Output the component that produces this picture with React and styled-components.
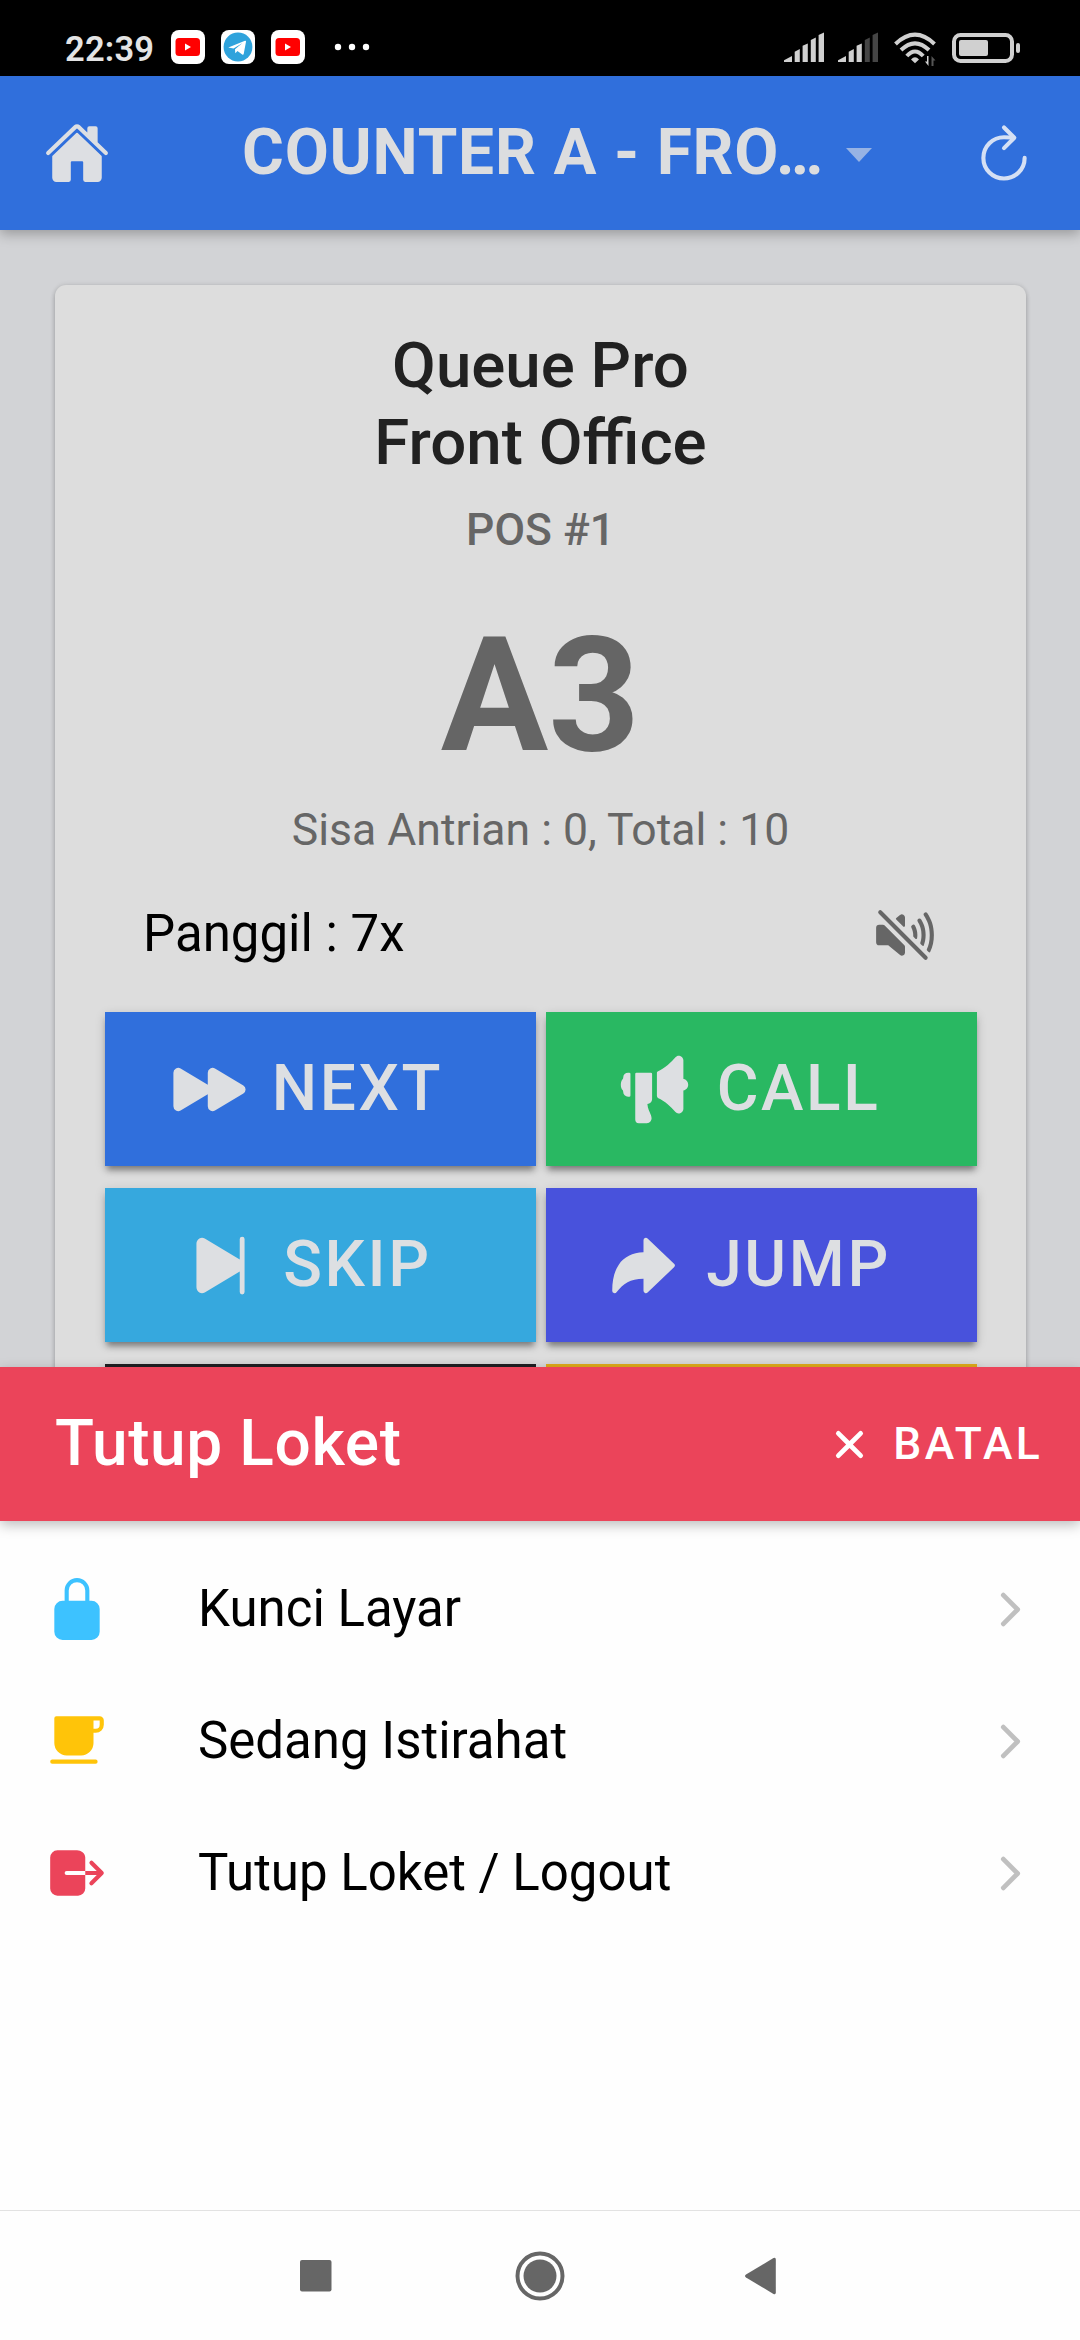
import React from 'react';
import styled, { createGlobalStyle } from 'styled-components';
import { IoHome, IoRefresh, IoVolumeMute, IoPlayForward, IoMegaphone, IoPlaySkipForward, IoArrowRedo, IoClose, IoLockClosed, IoCafe, IoLogOut, IoChevronForward } from 'react-icons/io5';

const GlobalStyle = createGlobalStyle`
  * { box-sizing: border-box; }
  body { margin: 0; background: #fff; font-family: Roboto, "Noto Sans", sans-serif; color: #000; }
`;
const Screen = styled.div`
  width: 1080px; height: 2340px; display: flex; flex-direction: column; overflow: hidden; background: #fefefe;
`;
const StatusBar = styled.header`
  flex: none; height: 76px; padding: 30px 60px 10px 65px; background: #000; color: #e4e4e4;
  display: flex; align-items: flex-start; justify-content: space-between;
`;
const StatusGroup = styled.div`
  display: flex; align-items: center; height: 34px;
`;
const Clock = styled.span`
  width: 106px; padding-top: 3px; font-size: 34.5px; line-height: 34px; font-weight: 600; letter-spacing: 0.2px; white-space: nowrap;
`;
const AppBadge = styled.svg`
  width: 34px; height: 34px; margin-right: 16px; display: block;
`;
const Dots = styled.svg`
  width: 36px; height: 8px; margin-left: 13px;
`;
const StatusIcons = styled(StatusGroup)`
  svg { display: block; overflow: visible; }
`;
const SignalIcon = styled.svg`
  width: 41px; height: 30px; margin-right: ${p => p.$gap}px;
`;
const WifiIcon = styled.svg`
  width: 42px; height: 34px; margin-right: 16px;
`;
const BatteryIcon = styled.svg`
  width: 68px; height: 30px; margin-top: 2px;
`;
const Toolbar = styled.div`
  flex: none; height: 154px; background: #306fdc; color: #dcdddf; display: flex; align-items: center;
  padding: 0 43px 0 44px; box-shadow: 0 4px 12px rgba(0,0,0,.28); z-index: 1;
`;
const ToolIcon = styled.div`
  width: 66px; height: 66px; font-size: 66px; display: flex; color: ${p => p.$color};
`;
const Title = styled.h1`
  flex: 1; margin: 0 20px 0 132px; font-size: 64px; font-weight: 700; line-height: 76px; letter-spacing: 0.8px; white-space: nowrap;
`;
const Caret = styled.div`
  border: 13px solid transparent; border-top: 14px solid #97b3e4; border-bottom: 0; margin: 3px 99px 0 0;
`;
const Main = styled.main`
  flex: none; height: 1137px; background: #d2d3d6; padding: 55px 54px 0 55px; overflow: hidden;
`;
const Card = styled.section`
  height: 1300px; border-radius: 11px; background: #dddddd; padding: 42px 50px 0;
  box-shadow: 0 3px 5px rgba(0,0,0,.2), 0 0 5px rgba(0,0,0,.12);
  display: flex; flex-direction: column; align-items: stretch; text-align: center;
`;
const Heading = styled.h2`
  margin: 0; font-size: 63.6px; line-height: 77px; font-weight: 500; color: #212121;
`;
const Pos = styled.div`
  margin-top: 23px; font-size: 44.4px; line-height: 52px; font-weight: 500; color: #666;
`;
const Ticket = styled.div`
  margin-top: 45px; font-size: 160px; line-height: 190px; font-weight: 700; color: #656565;
`;
const Remaining = styled.div`
  margin-top: 13px; font-size: 44.5px; line-height: 52px; color: #666;
`;
const CallRow = styled.div`
  display: flex; align-items: center; justify-content: space-between; height: 132px; padding: 0 38px 0 38px; margin-top: 11px;
  font-size: 51px;
  svg { color: #666; font-size: 66px; margin-top: 3px; }
`;
const Grid = styled.div`
  display: grid; grid-template-columns: 431px 431px; gap: 22px 10px; margin-top: 13px;
`;
const Action = styled.button`
  height: 154px; border: 0; padding: 0 27px 0 0; background: ${p => p.$color}; color: #dddfe2;
  display: flex; align-items: center; justify-content: center; gap: 24px;
  font: 500 64px/76px Roboto, sans-serif; letter-spacing: 2.6px;
  box-shadow: 0 6px 6px -2px rgba(0,0,0,.36), 0 3px 10px rgba(0,0,0,.16);
  svg { flex: none; font-size: 77px; }
`;
const Sheet = styled.section`
  flex: 1; display: flex; flex-direction: column; background: #fefefe; z-index: 2;
`;
const SheetHeader = styled.div`
  height: 154px; background: #eb445a; color: #fff; display: flex; align-items: center; justify-content: space-between;
  padding: 0 37px 0 55px; box-shadow: 0 4px 12px rgba(0,0,0,.26);
`;
const SheetTitle = styled.h2`
  margin: 0; font-size: 64px; font-weight: 500; line-height: 76px; letter-spacing: 0.6px;
`;
const Cancel = styled.button`
  border: 0; padding: 0; background: none; color: #fff; display: flex; align-items: center; gap: 18px;
  font: 500 44.4px/52px Roboto, sans-serif; letter-spacing: 3.3px;
  svg { font-size: 51px; }
`;
const List = styled.div`
  flex: 1; padding-top: 22px;
`;
const Item = styled.div`
  height: 132px; display: flex; align-items: center; padding: 0 44px; font-size: 51px; line-height: 60px;
`;
const ItemIcon = styled.div`
  display: flex; width: 66px; margin-right: 88px; color: ${p => p.$color}; font-size: 66px;
`;
const ItemLabel = styled.span`
  flex: 1;
`;
const ItemArrow = styled(IoChevronForward)`
  font-size: 51px; color: #c0c0c0;
`;
const NavBar = styled.nav`
  flex: none; height: 130px; border-top: 1px solid #e2e2e2; display: flex; justify-content: center; align-items: center; gap: 175px;
  svg { width: 50px; height: 50px; fill: #666; }
`;

const YouTube = () => (
  <AppBadge viewBox="0 0 34 34">
    <rect width="34" height="34" rx="8" fill="#fff" />
    <rect x="4.500" y="8" width="24.500" height="18" rx="3.500" fill="#f00" />
    <path d="M14 13.500v7l6-3.500z" fill="#fff" />
  </AppBadge>
);
const Telegram = () => (
  <AppBadge viewBox="0 0 34 34">
    <rect width="34" height="34" rx="8" fill="#fff" />
    <circle cx="17" cy="17" r="14.400" fill="#2fa3dc" />
    <path d="M7.300 17.600 24 10.700q1.200-.3 1 1L22.700 24q-.3 1.200-1.500.5l-4.700-3.600-2.200 2.400-.3-4 7.500-6.300-9 5.500z" fill="#fff" />
  </AppBadge>
);
const BARS = [
  'M0 30V28.300L8 24v6z',
  'M10.700 30V19.700L15.800 17v13z',
  'M18.600 30V13.700L23.800 11.400V30z',
  'M26.800 30V7.900L31.800 5.500V30z',
  'M34.600 30V2.900L40 .5V30z',
];
const Signal = ({ level, gap }) => (
  <SignalIcon viewBox="0 0 41 30" $gap={gap}>
    {BARS.map((d, i) => <path key={d} fill={i < level ? '#d0d0d0' : '#454545'} d={d} />)}
  </SignalIcon>
);
const Wifi = () => (
  <WifiIcon viewBox="0 0 42 34" fill="none" stroke="#d0d0d0" strokeWidth="4">
    <path d="M1.500 14Q21-4.600 40.500 14M7 20Q21 6.600 35 20M12.800 26Q21 17 29.200 26" />
    <path d="M17 29.500q4-4.500 8 0l-4 3.700z" fill="#d0d0d0" stroke="none" />
    <path d="M34.500 26v10l-3.500-4.500h2V26z" fill="#d0d0d0" stroke="none" />
    <path d="M37.500 36V26l4 4.500h-2V36z" fill="#555" stroke="none" />
  </WifiIcon>
);
const Battery = () => (
  <BatteryIcon viewBox="0 0 68 30">
    <rect x="2" y="2" width="58" height="26" rx="6.500" fill="none" stroke="#d0d0d0" strokeWidth="4" />
    <rect x="7" y="7" width="29" height="16" rx="2" fill="#d0d0d0" />
    <rect x="64" y="10" width="4" height="10" rx="2" fill="#d0d0d0" />
  </BatteryIcon>
);

const actions = [
  ['NEXT', '#306fdc', IoPlayForward],
  ['CALL', '#29b862', IoMegaphone],
  ['SKIP', '#36a8de', IoPlaySkipForward],
  ['JUMP', '#4852dc', IoArrowRedo],
];
const items = [
  ['Kunci Layar', '#3dc2ff', IoLockClosed],
  ['Sedang Istirahat', '#ffc409', IoCafe],
  ['Tutup Loket / Logout', '#eb445a', IoLogOut],
];

export default function App() {
  return (
    <Screen>
      <GlobalStyle />
      <StatusBar>
        <StatusGroup>
          <Clock>22:39</Clock>
          <YouTube /><Telegram /><YouTube />
          <Dots viewBox="0 0 36 8" fill="#fff">
            <circle cx="4" cy="4" r="3.200" /><circle cx="18" cy="4" r="3.200" /><circle cx="32" cy="4" r="3.200" />
          </Dots>
        </StatusGroup>
        <StatusIcons>
          <Signal level={5} gap={13} />
          <Signal level={3} gap={15} />
          <Wifi />
          <Battery />
        </StatusIcons>
      </StatusBar>
      <Toolbar>
        <ToolIcon $color="#dddfe3"><IoHome /></ToolIcon>
        <Title>COUNTER A - FRO…</Title>
        <Caret />
        <ToolIcon $color="#d5e0f4"><IoRefresh /></ToolIcon>
      </Toolbar>
      <Main>
        <Card>
          <Heading>Queue Pro<br />Front Office</Heading>
          <Pos>POS #1</Pos>
          <Ticket>A3</Ticket>
          <Remaining>Sisa Antrian : 0, Total : 10</Remaining>
          <CallRow><span>Panggil : 7x</span><IoVolumeMute /></CallRow>
          <Grid>
            {actions.map(([label, color, Icon]) => <Action key={label} $color={color}><Icon />{label}</Action>)}
            <Action $color="#1f1f22" /><Action $color="#dea91a" />
          </Grid>
        </Card>
      </Main>
      <Sheet>
        <SheetHeader>
          <SheetTitle>Tutup Loket</SheetTitle>
          <Cancel><IoClose />BATAL</Cancel>
        </SheetHeader>
        <List>
          {items.map(([label, color, Icon]) => (
            <Item key={label}>
              <ItemIcon $color={color}><Icon /></ItemIcon>
              <ItemLabel>{label}</ItemLabel>
              <ItemArrow />
            </Item>
          ))}
        </List>
      </Sheet>
      <NavBar>
        <svg viewBox="0 0 50 50"><rect x="10" y="9" width="31.500" height="31.500" rx="2" /></svg>
        <svg viewBox="0 0 50 50"><circle cx="25" cy="25" r="16.500" /><circle cx="25" cy="25" r="22.500" fill="none" stroke="#666" strokeWidth="4" /></svg>
        <svg viewBox="0 0 50 50"><path d="M6 23.500 33.500 7q2.300-1 2.300 1.500v33q0 2.500-2.300 1.500L6 26.500q-2-1.500 0-3z" /></svg>
      </NavBar>
    </Screen>
  );
}
